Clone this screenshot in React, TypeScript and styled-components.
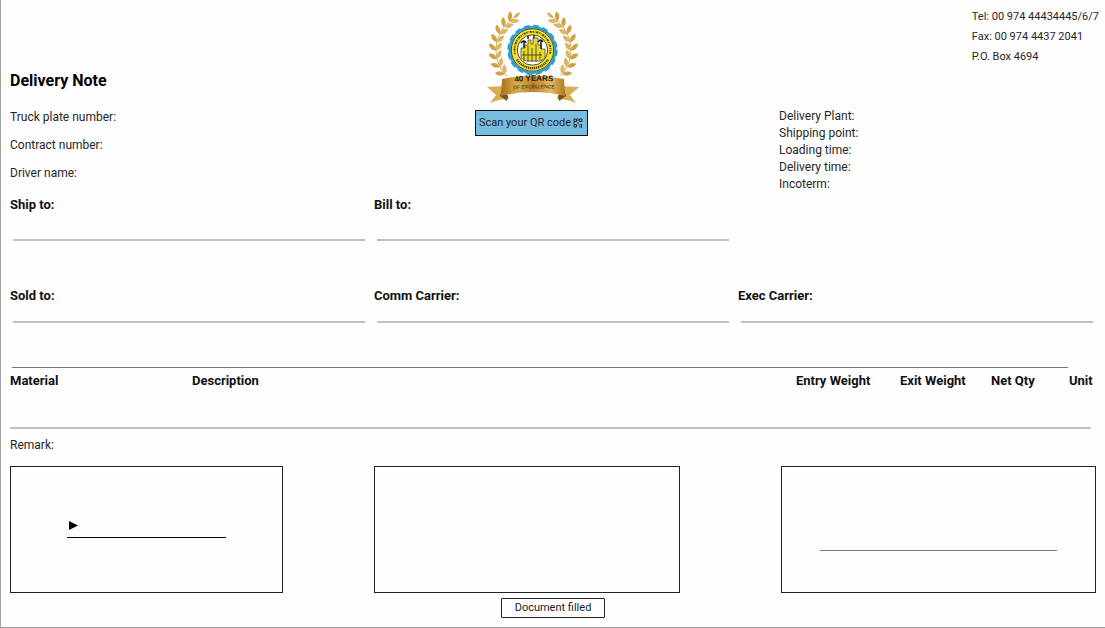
import React from "react";
import styled, { createGlobalStyle } from "styled-components";

const GlobalStyle = createGlobalStyle`
  * { box-sizing: border-box; }
  body {
    margin: 0;
    background: #fefefe;
    color: #262626;
    font-family: Roboto, "Liberation Sans", sans-serif;
    font-size: 12px;
    line-height: 16px;
  }
`;

const Page = styled.main`
  min-height: 100vh;
  padding: 7px 3px 9px 9px;
  border-left: 1px solid #a3a3a8;
  border-bottom: 1px solid #999;
`;

const Columns = styled.div<{ $height?: number }>`
  display: grid;
  grid-template-columns: repeat(3, minmax(0, 1fr));
  min-height: ${(p) => p.$height ?? 0}px;
`;

const TripInfo = styled.section`
  padding-top: 62px;
`;

const Title = styled.h1`
  margin: 0 0 10px;
  font-size: 16px;
  line-height: 24px;
  font-weight: 700;
  color: #000;
`;

const Field = styled.p<{ $line: number }>`
  margin: 0;
  line-height: ${(p) => p.$line}px;
`;

const Brand = styled.section`
  display: flex;
  flex-direction: column;
  align-items: center;
  gap: 4px;
  padding-right: 50px;
`;

const ScanButton = styled.button`
  display: flex;
  align-items: center;
  justify-content: center;
  gap: 2px;
  width: 113px;
  height: 26px;
  padding: 0;
  border: 1px solid #111;
  background: #78bcdf;
  color: #1c1c1c;
  font: 11px/16px Roboto, sans-serif;
  white-space: nowrap;
`;

const Company = styled.section`
  display: flex;
  flex-direction: column;
  gap: 41px;
`;

const Contact = styled.address`
  align-self: flex-end;
  padding-right: 3px;
  font-size: 11px;
  font-style: normal;
`;

const Shipment = styled.div`
  padding-left: 41px;
`;

const Party = styled.section<{ $gap: number }>`
  h2 {
    margin: 0 0 ${(p) => p.$gap}px;
    font-size: 13px;
    line-height: 16px;
    font-weight: 700;
    color: #111;
  }
`;

const Rule = styled.hr<{ $soft?: boolean }>`
  height: ${(p) => (p.$soft ? 2 : 1)}px;
  margin: 0;
  border: 0;
  background: ${(p) => (p.$soft ? "#c0c0c0" : "#777")};
`;

const PartyRule = styled(Rule)`
  margin: 0 9px 0 3px;
`;

const TableRule = styled(Rule)`
  margin: 0 34px 0 2px;
`;

const Items = styled.table`
  width: 100%;
  table-layout: fixed;
  border-collapse: collapse;
  th {
    height: 26px;
    padding: 0;
    text-align: left;
    font-size: 13px;
    font-weight: 700;
    color: #111;
    white-space: nowrap;
  }
  td {
    height: 33px;
    padding: 0;
  }
`;

const EndRule = styled(Rule)`
  margin-right: 11px;
`;

const Remark = styled.p`
  margin: 8px 0 13px;
`;

const Box = styled.div<{ $width: string; $margin?: string; $inset: string }>`
  width: ${(p) => p.$width};
  height: 127px;
  margin: ${(p) => p.$margin ?? "0"};
  padding: ${(p) => p.$inset};
  border: 1px solid #222;
`;

const SignLine = styled.div`
  display: flex;
  height: 17px;
  padding-left: 2px;
  border-bottom: 1px solid #000;
`;

const Footer = styled.footer`
  display: flex;
  justify-content: center;
  padding: 5px 0 0;
`;

const FilledButton = styled.button`
  width: 104px;
  height: 20px;
  margin-right: 6px;
  padding: 0;
  border: 1px solid #222;
  border-radius: 1px;
  background: #fff;
  color: #1c1c1c;
  font: 11px/16px Roboto, sans-serif;
`;

const leafAngles = [-40, -27, -14, -1, 12, 25, 38, 50];

function Laurel() {
  return (
    <g>
      <path d="M-27 26A37.500 37.500 0 0 1 -20 -31.700" fill="none" stroke="#c79a3e" strokeWidth="0.8" />
      {leafAngles.map((deg) => {
        const a = (deg * Math.PI) / 180;
        const at = `translate(${-37.5 * Math.cos(a)} ${-37.5 * Math.sin(a)})`;
        return (
          <g key={deg} transform={at}>
            <path transform={`rotate(${deg - 44})`} d="M0 0Q-4.500 -5 0 -10Q4.500 -5 0 0Z" fill="#d2a146" />
            <path transform={`rotate(${deg + 36})`} d="M0 0Q-4.500 -5 0 -10Q4.500 -5 0 0Z" fill="#dcb660" />
          </g>
        );
      })}
      <path transform="translate(-20 -31.700) rotate(48)" d="M0 0Q-3.500 -4 0 -9Q3.500 -4 0 0Z" fill="#d9b058" />
    </g>
  );
}

function Emblem() {
  return (
    <svg width="98" height="99" viewBox="482 7 98 99" role="img" aria-label="40 years of excellence">
      <defs>
        <linearGradient id="gold" x1="0" x2="1">
          <stop offset="0" stopColor="#a8701c" />
          <stop offset="0.25" stopColor="#dcae50" />
          <stop offset="0.5" stopColor="#b9822a" />
          <stop offset="0.78" stopColor="#e3ba60" />
          <stop offset="1" stopColor="#b07822" />
        </linearGradient>
        <path id="bandTop" d="M508 83Q533 79 560 82" />
        <path id="bandBottom" d="M510 90Q533 87 558 89" />
      </defs>
      <g transform="translate(533.500 50)"><Laurel /></g>
      <g transform="translate(533.500 50) scale(-1 1)"><Laurel /></g>
      <circle cx="532.500" cy="50" r="25" fill="#fff" />
      <circle cx="532.500" cy="50" r="22.800" fill="none" stroke="#2f9fd0" strokeWidth="2.600" />
      <circle cx="532.500" cy="50" r="24" fill="none" stroke="#2f9fd0" strokeWidth="2.400" strokeDasharray="5.900 3.520" />
      <circle cx="532.500" cy="50" r="21.200" fill="#f4e32a" stroke="#333" strokeWidth="0.9" />
      <circle cx="532.500" cy="50" r="15.200" fill="#fff" stroke="#333" strokeWidth="0.9" />
      <path d="M515 54A18 18 0 1 1 550 54" fill="none" stroke="#3d3a14" strokeWidth="1.800" strokeDasharray="1.200 1 0.600 0.800 2 0.900" />
      <path d="M517 59.500A18.200 18.200 0 0 0 548 59.500" fill="none" stroke="#3d3a14" strokeWidth="2.200" strokeDasharray="1.300 0.700" />
      <path d="M521 58V48h4v-3h3v-5h3v4h2v-6h5v7h3v4h4v9l-4 3h-15z" fill="#ecd923" stroke="#333" strokeWidth="0.7" />
      <path d="M524 61V51M528 62V46M532 62V48M536 62V44M540 60V52M522 55h20" stroke="#333" strokeWidth="0.8" />
      <path d="M524 48v-6M541 49v-8M521 43q3-4 5 0M538 42q3-4 5 0M528 39v-3M534 38v-3" fill="none" stroke="#111" strokeWidth="1.400" />
      <path d="M487 87l18-1 4 13q-10 0-19 4l6-8z" fill="#d9ad54" />
      <path d="M579 87l-18-1-4 13q10 0 19 4l-6-8z" fill="#d9ad54" />
      <path d="M502 90l6 6-1 5-7-5zM564 90l-6 6 1 5 7-5z" fill="#7d5214" />
      <path d="M502 79Q533 72 564 79L565 96Q533 88 501 96Z" fill="url(#gold)" />
      <g fill="#2a1b08" fontFamily="Liberation Sans, sans-serif">
        <text fontSize="8" fontWeight="700"><textPath href="#bandTop" startOffset="50%" textAnchor="middle">40 YEARS</textPath></text>
        <text fontSize="5"><textPath href="#bandBottom" startOffset="50%" textAnchor="middle">OF EXCELLENCE</textPath></text>
      </g>
    </svg>
  );
}

function QrIcon() {
  return (
    <svg width="10" height="10" viewBox="0 0 10 10" aria-hidden="true" fill="none" stroke="#222">
      <path d="M1 1h2.500v2.500H1zM6.500 1H9v2.500H6.500zM1 6.500h2.500V9H1z" />
      <path d="M5 0v3M4 5h2M0 5h2M6 7h2M8.500 6v4M6 9h1.500" strokeWidth="0.900" />
    </svg>
  );
}

function PartyBlock({ label, gap }: { label: string; gap: number }) {
  return (
    <Party $gap={gap}>
      <h2>{label}</h2>
      <PartyRule $soft />
    </Party>
  );
}

const tripFields = ["Truck plate number:", "Contract number:", "Driver name:"];
const shipmentFields = ["Delivery Plant:", "Shipping point:", "Loading time:", "Delivery time:", "Incoterm:"];
const contactLines = ["Tel: 00 974 44434445/6/7", "Fax: 00 974 4437 2041", "P.O. Box 4694"];

export default function App() {
  return (
    <>
      <GlobalStyle />
      <Page>
        <Columns $height={190}>
          <TripInfo>
            <Title>Delivery Note</Title>
            {tripFields.map((f) => <Field key={f} $line={28}>{f}</Field>)}
          </TripInfo>
          <Brand>
            <Emblem />
            <ScanButton type="button">Scan your QR code <QrIcon /></ScanButton>
          </Brand>
          <Company>
            <Contact>
              {contactLines.map((c) => <Field key={c} $line={20}>{c}</Field>)}
            </Contact>
            <Shipment>
              {shipmentFields.map((f) => <Field key={f} $line={17}>{f}</Field>)}
            </Shipment>
          </Company>
        </Columns>
        <Columns $height={91}>
          <PartyBlock label="Ship to:" gap={26} />
          <PartyBlock label="Bill to:" gap={26} />
        </Columns>
        <Columns $height={79}>
          <PartyBlock label="Sold to:" gap={17} />
          <PartyBlock label="Comm Carrier:" gap={17} />
          <PartyBlock label="Exec Carrier:" gap={17} />
        </Columns>
        <TableRule />
        <Items>
          <colgroup>
            <col width="182" />
            <col />
            <col width="104" />
            <col width="91" />
            <col width="78" />
            <col width="33" />
          </colgroup>
          <thead>
            <tr>
              <th>Material</th>
              <th>Description</th>
              <th>Entry Weight</th>
              <th>Exit Weight</th>
              <th>Net Qty</th>
              <th>Unit</th>
            </tr>
          </thead>
          <tbody>
            <tr><td colSpan={6} /></tr>
          </tbody>
        </Items>
        <EndRule $soft />
        <Remark>Remark:</Remark>
        <Columns>
          <Box $width="75%" $inset="54px 56px 0">
            <SignLine>
              <svg width="9" height="9" viewBox="0 0 9 9" aria-hidden="true"><path d="M0 0L9 4.500L0 9Z" /></svg>
            </SignLine>
          </Box>
          <Box $width="84%" $inset="0" />
          <Box $width="auto" $margin="0 6px 0 43px" $inset="83px 38px 0">
            <Rule />
          </Box>
        </Columns>
        <Footer>
          <FilledButton type="button">Document filled</FilledButton>
        </Footer>
      </Page>
    </>
  );
}
